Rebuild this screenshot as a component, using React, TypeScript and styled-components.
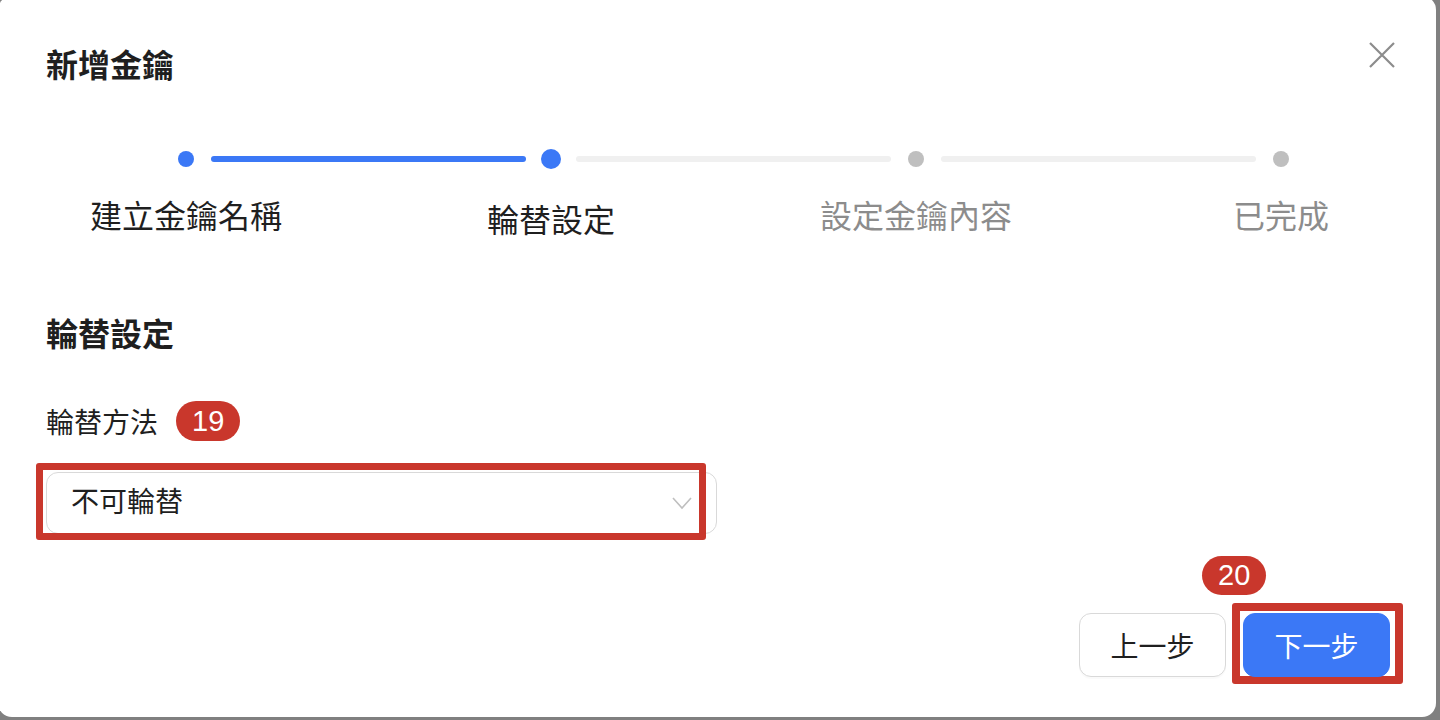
import styled, { createGlobalStyle } from "styled-components";

const GlobalStyle = createGlobalStyle`
  html, body {
    margin: 0;
    padding: 0;
    background: #808080;
    overflow: hidden;
  }
  body {
    font-family: "Liberation Sans", "Noto Sans CJK TC", sans-serif;
  }
`;

type StepState = "done" | "active" | "pending";

const steps: { title: string; state: StepState }[] = [
  { title: "建立金鑰名稱", state: "done" },
  { title: "輪替設定", state: "active" },
  { title: "設定金鑰內容", state: "pending" },
  { title: "已完成", state: "pending" },
];

const App = () => {
  return (
    <>
      <GlobalStyle />
      <Modal>
        <Header>
          <Title>新增金鑰</Title>
          <CloseButton aria-label="close">
            <svg width="26" height="26" viewBox="0 0 26 26">
              <path
                d="M1 1 L25 25 M25 1 L1 25"
                stroke="#8c8c8c"
                strokeWidth="2.2"
                fill="none"
              />
            </svg>
          </CloseButton>
        </Header>

        <Stepper>
          {steps.map((step, i) => (
            <Dot key={`dot-${i}`} $state={step.state} style={{ gridColumn: i * 2 + 1 }} />
          ))}
          {steps.slice(0, -1).map((step, i) => (
            <Tail
              key={`tail-${i}`}
              $done={step.state === "done"}
              style={{ gridColumn: i * 2 + 2 }}
            />
          ))}
          {steps.map((step, i) => (
            <StepLabel
              key={`label-${i}`}
              $state={step.state}
              style={{ gridColumn: i * 2 + 1 }}
            >
              {step.title}
            </StepLabel>
          ))}
        </Stepper>

        <SectionTitle>輪替設定</SectionTitle>

        <FieldLabel>
          <LabelText>輪替方法</LabelText>
          <Badge>19</Badge>
        </FieldLabel>

        <SelectWrap>
          <Select>
            <SelectValue>不可輪替</SelectValue>
            <svg width="20" height="13" viewBox="0 0 20 13">
              <polyline
                points="1,1 10,11 19,1"
                stroke="#bfbfbf"
                strokeWidth="1.6"
                fill="none"
              />
            </svg>
          </Select>
          <SelectHighlight />
        </SelectWrap>

        <Footer>
          <Button>上一步</Button>
          <PrimaryWrap>
            <FloatingBadge>20</FloatingBadge>
            <ButtonHighlight />
            <Button $primary>下一步</Button>
          </PrimaryWrap>
        </Footer>
      </Modal>
    </>
  );
};

const Modal = styled.div`
  box-sizing: border-box;
  width: 1438px;
  height: 721px;
  margin: -4px 0 0 -2px;
  padding: 54px 46px 40px 48px;
  background: #ffffff;
  border-radius: 14px;
  display: flex;
  flex-direction: column;
  color: #1f1f1f;
`;

const Header = styled.div`
  display: flex;
  justify-content: space-between;
  align-items: flex-start;
  height: 32px;
`;

const Title = styled.h1`
  margin: 0;
  font-size: 32px;
  line-height: 32px;
  font-weight: 700;
  color: #1f1f1f;
`;

const CloseButton = styled.button`
  border: none;
  background: none;
  padding: 0;
  margin: -8px -5px 0 0;
  width: 26px;
  height: 26px;
  display: flex;
  cursor: pointer;
`;

const Stepper = styled.div`
  display: grid;
  grid-template-columns: 20px 315px 20px 315px 20px 315px 20px;
  grid-template-rows: 20px auto;
  column-gap: 15px;
  row-gap: 32px;
  align-items: center;
  margin: 67px 0 0 130px;
`;

const Dot = styled.div<{ $state: StepState }>`
  grid-row: 1;
  justify-self: center;
  width: ${(p) => (p.$state === "active" ? 20 : 16)}px;
  height: ${(p) => (p.$state === "active" ? 20 : 16)}px;
  border-radius: 50%;
  background: ${(p) => (p.$state === "pending" ? "#bfbfbf" : "#3b78f6")};
`;

const Tail = styled.div<{ $done: boolean }>`
  grid-row: 1;
  height: 6px;
  border-radius: 3px;
  background: ${(p) => (p.$done ? "#3b78f6" : "#f0f0f0")};
`;

const StepLabel = styled.div<{ $state: StepState }>`
  grid-row: 2;
  align-self: start;
  justify-self: center;
  white-space: nowrap;
  font-size: 32px;
  line-height: 32px;
  padding-top: ${(p) => (p.$state === "active" ? 4 : 0)}px;
  color: ${(p) => (p.$state === "pending" ? "#8c8c8c" : "#1f1f1f")};
`;

const SectionTitle = styled.h2`
  margin: 82px 0 0;
  font-size: 32px;
  line-height: 32px;
  font-weight: 700;
  color: #1f1f1f;
`;

const FieldLabel = styled.div`
  display: flex;
  align-items: center;
  gap: 18px;
  height: 40px;
  margin-top: 50px;
  font-size: 28px;
  line-height: 28px;
  color: #1f1f1f;
`;

const LabelText = styled.span`
  padding-top: 5px;
`;

const Badge = styled.span`
  display: inline-flex;
  align-items: center;
  justify-content: center;
  box-sizing: border-box;
  height: 40px;
  padding: 0 16px;
  border-radius: 20px;
  background: #c9372c;
  color: #ffffff;
  font-family: "Liberation Sans", sans-serif;
  font-size: 29px;
`;

const SelectWrap = styled.div`
  position: relative;
  width: 671px;
  margin-top: 31px;
`;

const Select = styled.div`
  box-sizing: border-box;
  height: 62px;
  display: flex;
  align-items: center;
  justify-content: space-between;
  padding: 0 24px 0 24px;
  border: 1px solid #d9d9d9;
  border-radius: 12px;
  background: #ffffff;
`;

const SelectValue = styled.span`
  font-size: 28px;
  line-height: 28px;
  color: #1f1f1f;
`;

const SelectHighlight = styled.div`
  position: absolute;
  left: -10px;
  top: -9px;
  right: 11px;
  bottom: -6px;
  border: 7px solid #c9372c;
  border-radius: 3px;
  pointer-events: none;
`;

const Footer = styled.div`
  display: flex;
  justify-content: flex-end;
  align-items: flex-end;
  gap: 17px;
  margin-top: auto;
`;

const Button = styled.button<{ $primary?: boolean }>`
  position: relative;
  box-sizing: border-box;
  width: 147px;
  height: 64px;
  border-radius: 12px;
  border: 1px solid ${(p) => (p.$primary ? "#3b78f6" : "#d9d9d9")};
  background: ${(p) => (p.$primary ? "#3b78f6" : "#ffffff")};
  color: ${(p) => (p.$primary ? "#ffffff" : "#1f1f1f")};
  box-shadow: ${(p) => (p.$primary ? "none" : "0 2px 0 rgba(0, 0, 0, 0.02)")};
  font-family: "Liberation Sans", "Noto Sans CJK TC", sans-serif;
  font-size: 28px;
  cursor: pointer;
`;

const PrimaryWrap = styled.div`
  position: relative;
  display: flex;
`;

const ButtonHighlight = styled.div`
  position: absolute;
  left: -11px;
  top: -10px;
  right: -13px;
  bottom: -7px;
  border: 8px solid #c9372c;
  border-radius: 3px;
  pointer-events: none;
`;

const FloatingBadge = styled(Badge)`
  position: absolute;
  left: -41px;
  top: -57px;
  height: 39px;
`;

export default App;
